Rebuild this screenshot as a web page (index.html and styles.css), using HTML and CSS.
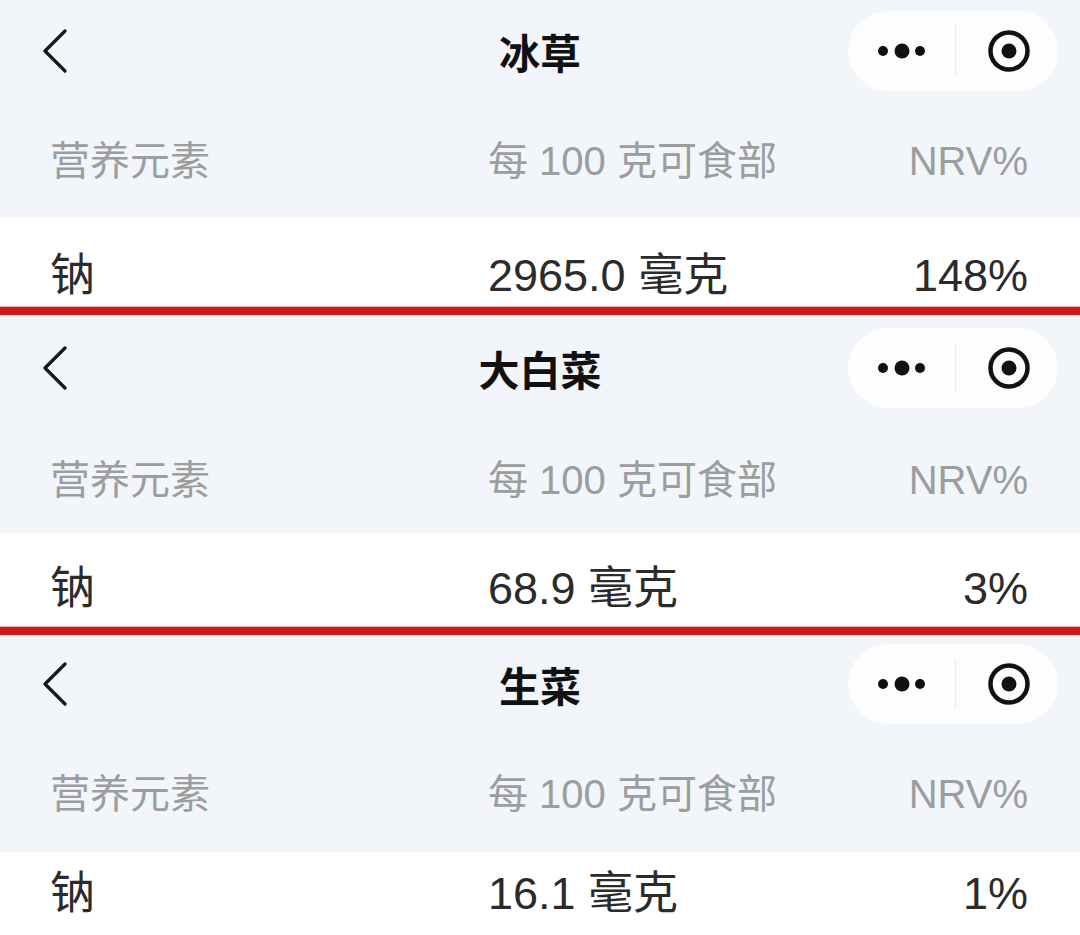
FILE: index.html
```html
<!DOCTYPE html>
<html lang="zh-CN">
<head>
<meta charset="utf-8">
<title>钠含量对比</title>
<link rel="stylesheet" href="styles.css">
</head>
<body>
<div class="page">

  <section class="panel panel--a">
    <div class="nav">
      <div class="nav-left">
        <svg class="back" viewBox="0 0 26 44" width="26" height="44"><polyline points="23,2 3,22 23,42"/></svg>
      </div>
      <div class="nav-title">冰草</div>
      <div class="nav-right">
        <div class="capsule">
          <div class="cap-cell cap-more">
            <svg viewBox="0 0 50 20" width="50" height="20"><circle cx="6" cy="10" r="5"/><circle cx="25" cy="10" r="7.5"/><circle cx="43" cy="10" r="5"/></svg>
          </div>
          <div class="cap-divider"></div>
          <div class="cap-cell cap-close">
            <svg viewBox="0 0 48 48" width="48" height="48"><circle class="ring" cx="24" cy="24" r="18.5"/><circle cx="24" cy="24" r="7.5"/></svg>
          </div>
        </div>
      </div>
    </div>
    <div class="tbl-head">
      <span>营养元素</span><span>每 100 克可食部</span><span class="num">NRV%</span>
    </div>
    <div class="tbl-row">
      <span>钠</span><span>2965.0 毫克</span><span class="num">148%</span>
    </div>
    <div class="red-rule"></div>
  </section>

  <section class="panel panel--b">
    <div class="nav">
      <div class="nav-left">
        <svg class="back" viewBox="0 0 26 44" width="26" height="44"><polyline points="23,2 3,22 23,42"/></svg>
      </div>
      <div class="nav-title">大白菜</div>
      <div class="nav-right">
        <div class="capsule">
          <div class="cap-cell cap-more">
            <svg viewBox="0 0 50 20" width="50" height="20"><circle cx="6" cy="10" r="5"/><circle cx="25" cy="10" r="7.5"/><circle cx="43" cy="10" r="5"/></svg>
          </div>
          <div class="cap-divider"></div>
          <div class="cap-cell cap-close">
            <svg viewBox="0 0 48 48" width="48" height="48"><circle class="ring" cx="24" cy="24" r="18.5"/><circle cx="24" cy="24" r="7.5"/></svg>
          </div>
        </div>
      </div>
    </div>
    <div class="tbl-head">
      <span>营养元素</span><span>每 100 克可食部</span><span class="num">NRV%</span>
    </div>
    <div class="tbl-row">
      <span>钠</span><span>68.9 毫克</span><span class="num">3%</span>
    </div>
    <div class="red-rule"></div>
  </section>

  <section class="panel panel--c">
    <div class="nav">
      <div class="nav-left">
        <svg class="back" viewBox="0 0 26 44" width="26" height="44"><polyline points="23,2 3,22 23,42"/></svg>
      </div>
      <div class="nav-title">生菜</div>
      <div class="nav-right">
        <div class="capsule">
          <div class="cap-cell cap-more">
            <svg viewBox="0 0 50 20" width="50" height="20"><circle cx="6" cy="10" r="5"/><circle cx="25" cy="10" r="7.5"/><circle cx="43" cy="10" r="5"/></svg>
          </div>
          <div class="cap-divider"></div>
          <div class="cap-cell cap-close">
            <svg viewBox="0 0 48 48" width="48" height="48"><circle class="ring" cx="24" cy="24" r="18.5"/><circle cx="24" cy="24" r="7.5"/></svg>
          </div>
        </div>
      </div>
    </div>
    <div class="tbl-head">
      <span>营养元素</span><span>每 100 克可食部</span><span class="num">NRV%</span>
    </div>
    <div class="tbl-row">
      <span>钠</span><span>16.1 毫克</span><span class="num">1%</span>
    </div>
  </section>

</div>
</body>
</html>
```

FILE: styles.css
```css
* { box-sizing: border-box; }

html, body {
  margin: 0;
  padding: 0;
  background: #f2f5f9;
}

body {
  width: 1080px;
  height: 935px;
  overflow: hidden;
  font-family: "Liberation Sans", "Noto Sans CJK SC", sans-serif;
}

.page {
  height: 935px;
  display: flex;
  flex-direction: column;
}

.panel {
  display: flex;
  flex-direction: column;
  flex: none;
  background: #f2f5f9;
}

/* per-screenshot crop metrics */
.panel--a { --nav-h: 102px; --head-h: 115px; --head-pt: 34px; --row-h: 90px; --row-pt: 34px; }
.panel--b { --nav-h: 106px; --head-h: 112px; --head-pt: 34px; --row-h: 94px; --row-pt: 31px; }
.panel--c { --nav-h: 98px;  --head-h: 119px; --head-pt: 36px; --row-h: 83px; --row-pt: 17px; }

.panel--c { flex: 1 1 auto; }

/* navigation bar */
.nav {
  height: var(--nav-h);
  flex: none;
  display: grid;
  grid-template-columns: 1fr auto 1fr;
  align-items: center;
  padding: 0 22px;
}

.nav-left { display: flex; align-items: center; padding-left: 20px; }

.back {
  display: block;
  fill: none;
  stroke: #151515;
  stroke-width: 3.2;
  stroke-linecap: round;
  stroke-linejoin: round;
}

.nav-title {
  font-family: "Noto Sans CJK SC", sans-serif;
  font-size: 41px;
  font-weight: 700;
  color: #111;
  line-height: 50px;
}

.nav-right { display: flex; justify-content: flex-end; }

.capsule {
  width: 210px;
  height: 80px;
  border-radius: 40px;
  background: #fdfdfe;
  display: flex;
  align-items: center;
}

.cap-cell {
  height: 100%;
  display: flex;
  align-items: center;
  justify-content: center;
}

.cap-more { width: 107px; }
.cap-close { width: 102px; padding-left: 4px; }

.cap-cell svg { display: block; fill: #111; }

.cap-close .ring {
  fill: none;
  stroke: #111;
  stroke-width: 4.5;
}

.cap-divider {
  width: 1px;
  height: 50px;
  background: #e7e9ec;
}

/* table */
.tbl-head,
.tbl-row {
  display: grid;
  grid-template-columns: 438px 1fr auto;
  padding: 0 52px 0 50px;
  line-height: 50px;
  flex: none;
}

.tbl-head {
  height: var(--head-h);
  padding-top: var(--head-pt);
  font-size: 40px;
  color: #9b9d9f;
}

.tbl-row {
  height: var(--row-h);
  padding-top: var(--row-pt);
  background: #fff;
  font-size: 45px;
  color: #2b2b2b;
}

.num { text-align: right; }

.panel--c .tbl-row { flex: 1 0 auto; }

.red-rule {
  height: 8px;
  flex: none;
  background: #d0181d;
  box-shadow: 0 -1px 0 #f1b5b6, 0 1px 0 #f1b5b6;
}
```
